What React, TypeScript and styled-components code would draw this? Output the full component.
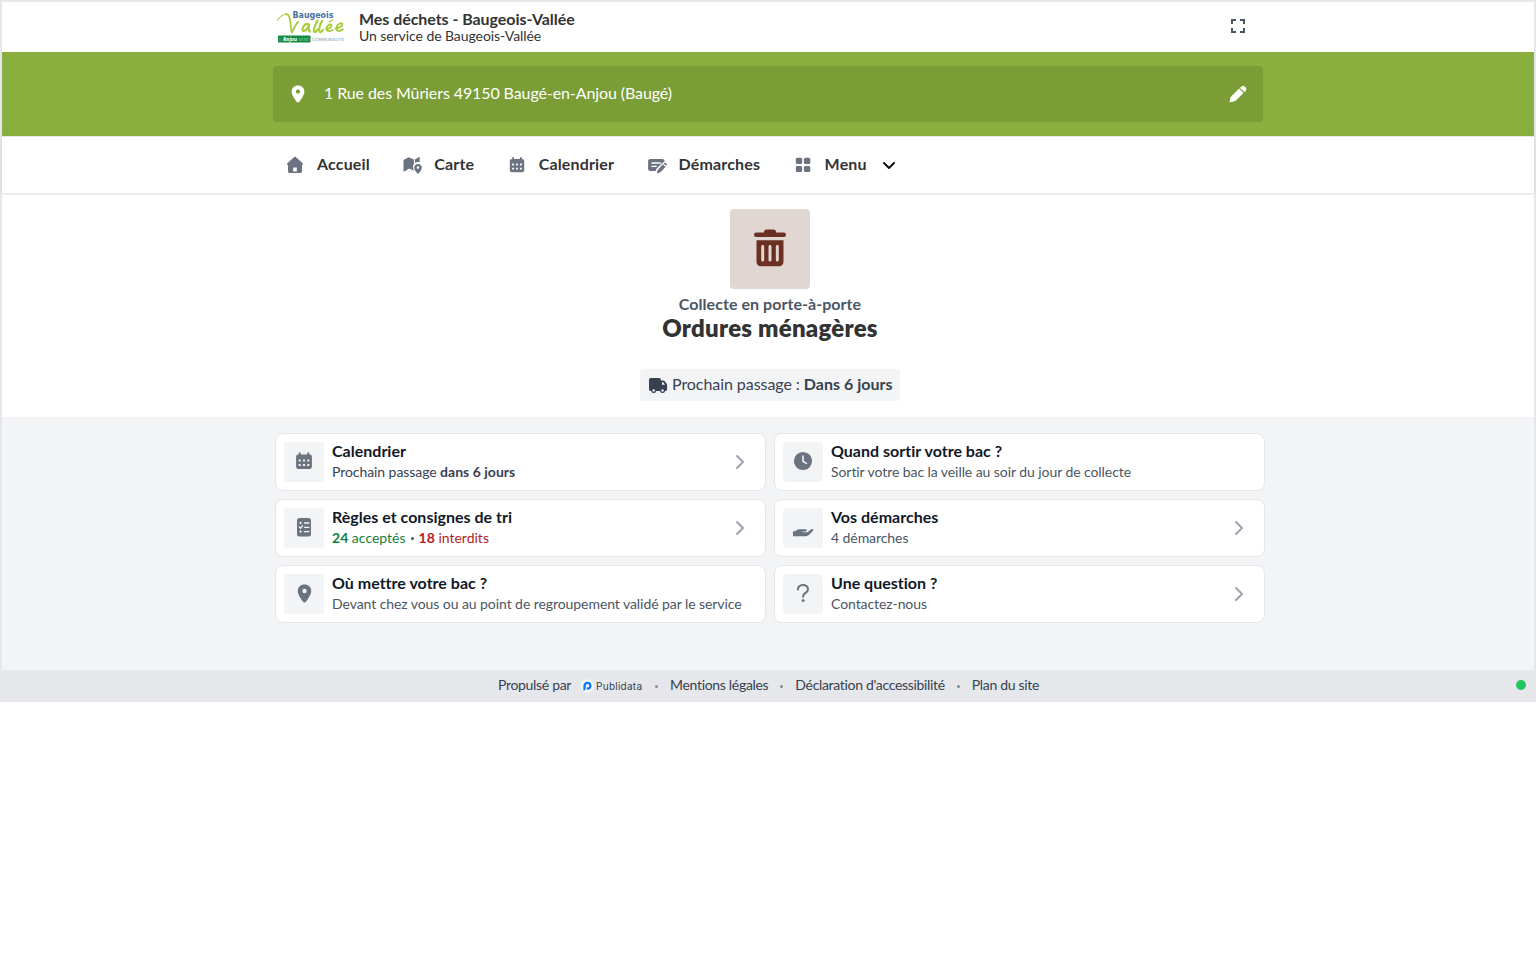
import React from "react";
import styled, { createGlobalStyle } from "styled-components";

const Global = createGlobalStyle`
  *, *::before, *::after { box-sizing: border-box; }
  body {
    margin: 0;
    background: #fff;
    color: #333;
    font-family: Lato, "Open Sans", sans-serif;
    font-size: 16px;
    line-height: 24px;
    font-variant-ligatures: none;
  }
  h1, h2, h3, p { margin: 0; font: inherit; font-variant-ligatures: none; }
  svg { display: block; flex: none; }
`;

/* ---------- Icons ---------- */

const PinIcon = ({ w = 20 }: { w?: number }) => (
  <svg width={w} height={w} viewBox="0 0 20 20" fill="currentColor">
    <path
      fillRule="evenodd"
      d="M10 1.500C6.400 1.500 3.600 4.100 3.600 7.500c0 3.600 3.200 7.500 5 10.300.7 1 2.100 1 2.800 0 1.800-2.800 5-6.700 5-10.300C16.400 4.100 13.600 1.500 10 1.500Zm0 4a2.100 2.100 0 1 1 0 4.200A2.100 2.100 0 0 1 10 5.500Z"
    />
  </svg>
);

const PencilIcon = () => (
  <svg width="20" height="20" viewBox="0 0 20 20" fill="currentColor">
    <path d="M11.200 4.600 15.500 8.900 8.200 16.200C6.500 17.500 4.300 17.900 1.600 18.200c.1-2.600.6-4.900 2-6.300L11.200 4.600Z" />
    <path d="M12 3.900c1.700-2 3.800-2.500 5.400-.9 1.600 1.600 1.200 3.700-.8 5.300L12 3.900Z" />
  </svg>
);

const FullscreenIcon = () => (
  <svg width="16" height="18" viewBox="0 0 16 18" fill="none" stroke="#4b5563" strokeWidth="2">
    <path d="M2 6V2h4M10 2h4v4M14 10v4h-4M6 14H2v-4" />
  </svg>
);

const HomeIcon = () => (
  <svg width="20" height="20" viewBox="0 0 20 20" fill="currentColor">
    <path
      fillRule="evenodd"
      d="M9.200 2a1.200 1.200 0 0 1 1.600 0l6.800 6.300c.7.700.4 1.700-.5 1.700H17v6.200c0 1-.8 1.800-1.800 1.800H4.800C3.800 18 3 17.200 3 16.200V10h-.1c-.9 0-1.200-1-.5-1.700L9.200 2ZM8.200 12.600v3.800h3.600v-3.800H8.200Z"
    />
  </svg>
);

const MapIcon = () => (
  <svg width="20" height="20" viewBox="0 0 20 20" fill="currentColor">
    <path d="M1.500 5 6.600 2.300 12 4.500v4.600c-1.200 1.400-1.300 3-.6 4.800l.8 1.900-5-2.200-4.600 2.900c-.6.300-1.100 0-1.100-.6V5Z" />
    <path d="M13 4.500 16.600 2.200c.6-.3 1.100 0 1.100.6v4.400c-1.700-.6-3.400-.3-4.700.7V4.500Z" />
    <path
      fillRule="evenodd"
      d="M16 9c-2.200 0-3.800 1.500-3.800 3.600 0 2 1.500 3.900 2.800 5.500.6.700 1.400.7 2 0 1.300-1.600 2.800-3.500 2.800-5.500C19.800 10.500 18.200 9 16 9Zm0 2.200a1.300 1.300 0 1 1 0 2.600 1.300 1.300 0 0 1 0-2.600Z"
    />
  </svg>
);

const CalendarIcon = ({ w = 20 }: { w?: number }) => (
  <svg width={w} height={w} viewBox="0 -0.400 20 20" fill="currentColor">
    <path
      fillRule="evenodd"
      d="M5.200 3.500V2.500a.9.900 0 0 1 1.800 0V3.600h6V2.500a.9.900 0 0 1 1.800 0V3.600h.4c1.100 0 2 .8 2 1.900v9.400c0 1.100-.9 2-2 2H4.800c-1.100 0-2-.9-2-2V5.500c0-1.100.9-1.900 2-1.900h.4v-.1ZM5.200 8.200V10H7V8.200H5.200Zm3.900 0V10h1.800V8.200H9.100Zm3.900 0V10h1.800V8.200H13ZM5.200 12.400v1.800H7v-1.800H5.200Zm3.900 0v1.800h1.800v-1.800H9.100Zm3.900 0v1.800h1.800v-1.800H13Z"
    />
  </svg>
);

const FormIcon = () => (
  <svg width="22" height="20" viewBox="0 0 22 20" fill="currentColor">
    <path
      fillRule="evenodd"
      d="M3.300 4h12c1.300 0 2.200.9 2.200 2.200v.6c-1 .1-1.600.6-2.200 1.200L10 13.300c-.7.700-1 1.500-1.200 2.700H3.300c-1.300 0-2.200-.9-2.200-2.200V6.200C1.100 4.900 2 4 3.300 4Zm1.200 3.300v1.400h9.300V7.300H4.500Zm0 3.400v1.400h5.200v-1.400H4.500Z"
    />
    <path d="m15.800 9.300 2.700 2.700-4.600 4.700c-.9.900-2.300 1.300-3.900 1.600.1-1.600.5-3 1.400-4l4.400-5Zm.9-.9c.8-.8 1.800-.8 2.500-.1s.7 1.700-.1 2.600l-2.400-2.500Z" />
  </svg>
);

const GridIcon = () => (
  <svg width="20" height="20" viewBox="0 0 20 20" fill="currentColor">
    <rect x="2.800" y="2.800" width="6.400" height="6.200" rx="1.500" />
    <rect x="10.900" y="2.800" width="6.400" height="6.200" rx="1.500" />
    <rect x="2.800" y="10.900" width="6.400" height="6.200" rx="1.500" />
    <rect x="10.900" y="10.900" width="6.400" height="6.200" rx="1.500" />
  </svg>
);

const ChevronDown = () => (
  <svg width="16" height="16" viewBox="0 0 16 16" fill="none" stroke="#111" strokeWidth="2" strokeLinecap="round" strokeLinejoin="round">
    <path d="m3 5 5 5 5-5" />
  </svg>
);

const ChevronRight = () => (
  <svg width="16" height="16" viewBox="0 0 16 16" fill="none" stroke="#9ca3af" strokeWidth="2" strokeLinecap="round" strokeLinejoin="round">
    <path d="m5 2 6 6-6 6" />
  </svg>
);

const TrashIcon = () => (
  <svg width="40" height="40" viewBox="0 0.700 40 40" fill="currentColor">
    <path d="M14 3.500C14.300 2 15 1.300 16.500 1.300h7C25 1.300 25.700 2 26 3.500l.2.700h7.600a2.200 2.200 0 0 1 0 4.400H6.200a2.200 2.200 0 0 1 0-4.400h7.600l.2-.7Z" />
    <path
      fillRule="evenodd"
      d="M6.500 12h27v21.500c0 2.700-1.800 4.500-4.500 4.500H11c-2.700 0-4.500-1.800-4.500-4.500V12Zm6.200 4.700c-.9 0-1.500.6-1.500 1.500v13.600c0 .9.600 1.500 1.500 1.500s1.500-.6 1.500-1.500V18.200c0-.9-.6-1.500-1.500-1.500Zm7.300 0c-.9 0-1.500.6-1.500 1.500v13.600c0 .9.600 1.500 1.500 1.500s1.500-.6 1.500-1.500V18.200c0-.9-.6-1.500-1.500-1.500Zm7.300 0c-.9 0-1.500.6-1.500 1.500v13.600c0 .9.600 1.500 1.500 1.500s1.500-.6 1.500-1.500V18.200c0-.9-.6-1.500-1.500-1.500Z"
    />
  </svg>
);

const TruckIcon = () => (
  <svg width="20" height="20" viewBox="0 0 20 20" fill="currentColor">
    <path d="M2.800 3H11c1 0 1.800.8 1.800 1.800V5.500h2.300c.7 0 1.300.3 1.700.8l1.700 2.200c.4.500.6 1 .6 1.600v4.400c0 .9-.5 1.400-1.400 1.400H2.800C1.600 15.900 1 15.200 1 14V4.800C1 3.800 1.800 3 2.800 3Z" />
    <path d="M14 7.200v2.500h3l-1.600-2.200a1 1 0 0 0-.7-.3H14Z" fill="#f3f4f6" />
    <circle cx="5.700" cy="15.500" r="2.500" />
    <circle cx="14.500" cy="15.500" r="2.500" />
    <circle cx="5.700" cy="15.500" r="1.200" fill="#f3f4f6" />
    <circle cx="14.500" cy="15.500" r="1.200" fill="#f3f4f6" />
  </svg>
);

const ClockIcon = () => (
  <svg width="20" height="20" viewBox="0 0 20 20">
    <circle cx="10" cy="10" r="9.100" fill="currentColor" />
    <path d="M10 5v5.400l3.400 2" fill="none" stroke="#f3f4f6" strokeWidth="1.600" strokeLinecap="round" strokeLinejoin="round" />
  </svg>
);

const ListIcon = () => (
  <svg width="20" height="20" viewBox="0 0 20 20">
    <rect x="3" y="1" width="14" height="18.500" rx="2.500" fill="currentColor" />
    <g fill="none" stroke="#f3f4f6" strokeWidth="1.300" strokeLinecap="round" strokeLinejoin="round">
      <path d="M10.500 6H15M10.500 10.300H15M10.500 14.700H15M5.300 10l1.200 1.300 2-2.500" />
    </g>
    <circle cx="6.600" cy="5.900" r="1.100" fill="#f3f4f6" />
    <circle cx="6.600" cy="14.700" r="1.100" fill="#f3f4f6" />
  </svg>
);

const HandIcon = () => (
  <svg width="22" height="20" viewBox="0 0 22 20" fill="currentColor">
    <path
      d="M1 14.200h2.200l1.600-1.300c.7-.5 1.400-.7 2.200-.7h6.500c.8 0 1.300.6 1.200 1.200-.1.700-.6 1-1.300 1h-2.600c-.3 0-.4.200-.4.400s.1.400.4.400h3.700c.6 0 1-.1 1.500-.5l3.400-2.400c.6-.4 1.300-.3 1.700.2.400.6.200 1.200-.3 1.600l-4 3.900c-.8.700-1.700 1.200-2.800 1.200H1v-5Z"
    />
  </svg>
);

const QuestionIcon = () => (
  <svg width="20" height="20" viewBox="0 0 20 20">
    <path d="M4.900 6.500c0-2.700 2-4.600 4.900-4.600 3 0 5.200 1.800 5.200 4.300 0 4.100-4.900 3.200-4.900 7.200v.4" fill="none" stroke="currentColor" strokeWidth="2" strokeLinecap="round" />
    <circle cx="10.100" cy="17.600" r="1.500" fill="currentColor" />
  </svg>
);

const TownLogo = () => (
  <svg width="70" height="36" viewBox="0 0 70 36">
    <g fill="none" stroke="#a9cc3a" strokeLinecap="round" strokeLinejoin="round">
      <path d="M1.500 11C4 7.500 7 5.500 10.500 5.200" strokeWidth="1.200" strokeDasharray="3 1.500" />
      <path d="M10.500 5.200c5-.2 3.500 14.500 5.500 18.300C18 19 19.500 15.500 22 13" strokeWidth="1.800" />
      <path d="M33 15.500c-3-1.700-6 1-6.500 4.500-.4 3 3.500 3 6.500-3.500-.6 3-.8 5 1 6" strokeWidth="2.200" />
      <path d="M41.500 11.500c-2 4-4 8.500-3.500 11 1 1.500 2.500-.5 3.500-2M46 12c-2 4-3.500 8-2.500 10.500 1 1.200 2.500.2 3.500-1.500" strokeWidth="2.200" />
      <path d="M50 20c3-.3 6-1.800 5.500-3.600-.8-2-4.500-.3-5 2.800-.3 2.800 2.800 4 6 1.500M59.500 19.500c3.500-.5 7.300-2.300 6.800-4.500-.7-2-5.300 0-5.800 3.800-.2 3.300 3 4.300 6.300 1.500" strokeWidth="1.900" />
      <path d="m53.500 13 3-2" strokeWidth="1.200" />
    </g>
    <text x="16.500" y="8.800" fontFamily="DejaVu Sans" fontWeight="700" fontSize="8" textLength="41" lengthAdjust="spacingAndGlyphs" fill="#4a719d">Baugeois</text>
    <rect x="2" y="26.500" width="32.500" height="7" rx=".7" fill="#128a43" />
    <text x="3.300" y="31.900" fontFamily="DejaVu Sans" fontSize="4.500" textLength="2.400" lengthAdjust="spacingAndGlyphs" fill="#b9dfc5">L'</text>
    <text x="7" y="32" fontFamily="DejaVu Sans" fontWeight="700" fontSize="5.500" textLength="14" lengthAdjust="spacingAndGlyphs" fill="#fff">Anjou</text>
    <text x="22.500" y="31.800" fontFamily="DejaVu Sans" fontSize="4.200" textLength="10.500" lengthAdjust="spacingAndGlyphs" fill="#9dd0ad">VERT</text>
    <text x="36" y="31.800" fontFamily="DejaVu Sans" fontSize="4.200" textLength="32" lengthAdjust="spacingAndGlyphs" fill="#7f98ae">COMMUNAUTÉ</text>
  </svg>
);

const PublidataMark = () => (
  <svg width="14" height="14" viewBox="0 0 14 14">
    <circle cx="7" cy="7" r="6.800" fill="#f5f6f8" />
    <path
      fillRule="evenodd"
      d="M7.500 2.800a4 4 0 1 1 0 8H6.800v-2.200h.8a1.800 1.800 0 1 0-1.900-1.700v2.400c0 1.500-.8 2.500-2.300 2.500V7c0-2.500 1.600-4.200 4.100-4.200Z"
      fill="#0b7bf5"
    />
  </svg>
);

/* ---------- Layout ---------- */

const Frame = styled.div`
  border: 2px solid #e5e7eb;
  border-bottom: 0;
`;

const Container = styled.div`
  width: 990px;
  margin: 0 auto;
`;

const Header = styled.header`
  height: 50px;
`;

const HeaderRow = styled(Container)`
  display: flex;
  align-items: center;
  height: 50px;
  padding: 0 17px 0 3px;
`;

const Titles = styled.div`
  flex: 1;
  margin-left: 13px;
  white-space: nowrap;
`;

const SiteTitle = styled.h1`
  font-weight: 700;
  line-height: 18px;
  letter-spacing: -0.05px;
`;

const SiteSubtitle = styled.p`
  font-size: 14px;
  line-height: 16px;
  letter-spacing: -0.07px;
`;

const AddressBand = styled.section`
  padding: 14px 0;
  background: #89b03e;
`;

const AddressBar = styled(Container)`
  display: flex;
  align-items: center;
  height: 56px;
  padding: 0 15px;
  border-radius: 4px;
  background: #7a9d35;
  color: #fff;
`;

const AddressText = styled.p`
  flex: 1;
  margin-left: 16px;
  padding-bottom: 2px;
  letter-spacing: -0.1px;
`;

const NavBar = styled.nav`
  height: 57px;
  border-top: 1px solid #e5e7eb;
  box-shadow: 0 1px 2px rgba(0, 0, 0, 0.16);
`;

const NavList = styled(Container)`
  display: flex;
  align-items: center;
  gap: 32.5px;
  height: 54px;
  padding-left: 12px;
`;

const NavItem = styled.a`
  display: flex;
  align-items: center;
  font-weight: 700;
  letter-spacing: 0.15px;
  white-space: nowrap;
`;

const NavGlyph = styled.span<{ $gap?: number }>`
  margin-top: 2px;
  margin-right: ${(p) => p.$gap ?? 12}px;
  color: #6b7280;
`;

const NavCaret = styled.span`
  margin: 3px 0 0 14px;
`;

const Hero = styled.section`
  display: flex;
  flex-direction: column;
  align-items: center;
  height: 224px;
  padding: 16px 0 0 4px;
`;

const HeroTile = styled.div`
  display: grid;
  place-items: center;
  width: 80px;
  height: 80px;
  border-radius: 4px;
  background: #e1d7d2;
  color: #6b3022;
`;

const HeroKind = styled.p`
  margin-top: 3px;
  color: #4b5563;
  font-weight: 700;
  line-height: 24px;
  letter-spacing: 0.05px;
`;

const HeroTitle = styled.h2`
  font-size: 24px;
  font-weight: 800;
  line-height: 24px;
  letter-spacing: 0.24px;
`;

const NextPickup = styled.div`
  display: flex;
  align-items: center;
  gap: 4px;
  width: 260px;
  height: 32px;
  margin-top: 29px;
  padding: 0 8px;
  border-radius: 4px;
  background: #f3f4f6;
  color: #374151;
  white-space: nowrap;
`;

const PickupText = styled.span`
  padding-bottom: 2px;
  letter-spacing: -0.06px;
`;

const Strong = styled.b`
  font-weight: 700;
  letter-spacing: 0.02px;
`;

const CardsSection = styled.main`
  height: 253px;
  padding: 16px 0 0 4px;
  background: #f3f4f6;
`;

const CardsGrid = styled(Container)`
  display: grid;
  grid-template-columns: 1fr 1fr;
  gap: 8px;
`;

const Card = styled.article`
  display: flex;
  align-items: center;
  height: 58px;
  padding: 0 17px 0 8px;
  border: 1px solid #e5e7eb;
  border-radius: 8px;
  background: #fff;
`;

const CardTile = styled.div`
  display: grid;
  place-items: center;
  width: 40px;
  height: 40px;
  border-radius: 4px;
  background: #f3f4f6;
  color: #6b7280;
  padding-bottom: 2px;
`;

const CardBody = styled.div`
  flex: 1;
  margin-left: 8px;
  padding-bottom: 2px;
  white-space: nowrap;
`;

const CardTitle = styled.h3`
  color: #111827;
  font-weight: 700;
  line-height: 22px;
  letter-spacing: 0.01px;
`;

const CardText = styled.p<{ $dark?: boolean }>`
  color: ${(p) => (p.$dark ? "#374151" : "#4b5563")};
  font-size: 14px;
  line-height: 20px;
  letter-spacing: -0.07px;
`;

const Tone = styled.span<{ $color: string }>`
  color: ${(p) => p.$color};
  letter-spacing: 0;
`;

const Bullet = styled.i`
  display: inline-block;
  width: 3px;
  height: 3px;
  margin: 0 5px;
  border-radius: 50%;
  background: #4b5563;
  vertical-align: 3px;
`;

const Footer = styled.footer`
  display: flex;
  align-items: center;
  height: 32px;
  padding: 0 10px;
  background: #e5e7eb;
  color: #374151;
  font-size: 14px;
  line-height: 20px;
  letter-spacing: -0.32px;
  white-space: nowrap;
`;

const FooterLinks = styled.div`
  display: flex;
  align-items: center;
  margin-left: 488px;
`;

const FooterLink = styled.span`
  padding-bottom: 2px;
`;

const Brand = styled.span`
  display: flex;
  align-items: center;
  gap: 2px;
  width: 63px;
  margin-left: 9px;
  padding-bottom: 1px;
  font-family: Inter, sans-serif;
  font-size: 10px;
  letter-spacing: 0.25px;
`;

const Separator = styled.i`
  width: 3px;
  height: 3px;
  margin: 0 12px;
  border-radius: 50%;
  background: #858b95;
`;

const StatusDot = styled.span`
  width: 10px;
  height: 10px;
  margin: 0 0 2px auto;
  border-radius: 50%;
  background: #22c55e;
`;

interface InfoCardProps {
  icon: React.ReactNode;
  title: string;
  link?: boolean;
  dark?: boolean;
  children: React.ReactNode;
}

const InfoCard = ({ icon, title, link, dark, children }: InfoCardProps) => (
  <Card>
    <CardTile>{icon}</CardTile>
    <CardBody>
      <CardTitle>{title}</CardTitle>
      <CardText $dark={dark}>{children}</CardText>
    </CardBody>
    {link && <ChevronRight />}
  </Card>
);

export default function App() {
  return (
    <>
      <Global />
      <Frame>
        <Header>
          <HeaderRow>
            <TownLogo />
            <Titles>
              <SiteTitle>Mes déchets - Baugeois-Vallée</SiteTitle>
              <SiteSubtitle>Un service de Baugeois-Vallée</SiteSubtitle>
            </Titles>
            <FullscreenIcon />
          </HeaderRow>
        </Header>
        <AddressBand>
          <AddressBar>
            <PinIcon />
            <AddressText>1 Rue des Mûriers 49150 Baugé-en-Anjou (Baugé)</AddressText>
            <PencilIcon />
          </AddressBar>
        </AddressBand>
        <NavBar>
          <NavList>
            <NavItem><NavGlyph><HomeIcon /></NavGlyph>Accueil</NavItem>
            <NavItem><NavGlyph><MapIcon /></NavGlyph>Carte</NavItem>
            <NavItem><NavGlyph><CalendarIcon /></NavGlyph>Calendrier</NavItem>
            <NavItem><NavGlyph $gap={10}><FormIcon /></NavGlyph>Démarches</NavItem>
            <NavItem><NavGlyph><GridIcon /></NavGlyph>Menu<NavCaret><ChevronDown /></NavCaret></NavItem>
          </NavList>
        </NavBar>
        <Hero>
          <HeroTile><TrashIcon /></HeroTile>
          <HeroKind>Collecte en porte-à-porte</HeroKind>
          <HeroTitle>Ordures ménagères</HeroTitle>
          <NextPickup>
            <TruckIcon />
            <PickupText>Prochain passage : <Strong>Dans 6 jours</Strong></PickupText>
          </NextPickup>
        </Hero>
        <CardsSection>
          <CardsGrid>
            <InfoCard icon={<CalendarIcon w={22} />} title="Calendrier" link dark>
              Prochain passage <Strong>dans 6 jours</Strong>
            </InfoCard>
            <InfoCard icon={<ClockIcon />} title="Quand sortir votre bac ?">
              Sortir votre bac la veille au soir du jour de collecte
            </InfoCard>
            <InfoCard icon={<ListIcon />} title="Règles et consignes de tri" link>
              <Tone $color="#15803d"><Strong>24</Strong> acceptés</Tone>
              <Bullet />
              <Tone $color="#b91c1c"><Strong>18</Strong> interdits</Tone>
            </InfoCard>
            <InfoCard icon={<HandIcon />} title="Vos démarches" link>4 démarches</InfoCard>
            <InfoCard icon={<PinIcon w={21} />} title="Où mettre votre bac ?">
              Devant chez vous ou au point de regroupement validé par le service
            </InfoCard>
            <InfoCard icon={<QuestionIcon />} title="Une question ?" link>Contactez-nous</InfoCard>
          </CardsGrid>
        </CardsSection>
      </Frame>
      <Footer>
        <FooterLinks>
          <FooterLink>Propulsé par</FooterLink>
          <Brand><PublidataMark />Publidata</Brand>
          <Separator />
          <FooterLink>Mentions légales</FooterLink>
          <Separator />
          <FooterLink>Déclaration d'accessibilité</FooterLink>
          <Separator />
          <FooterLink>Plan du site</FooterLink>
        </FooterLinks>
        <StatusDot />
      </Footer>
    </>
  );
}
